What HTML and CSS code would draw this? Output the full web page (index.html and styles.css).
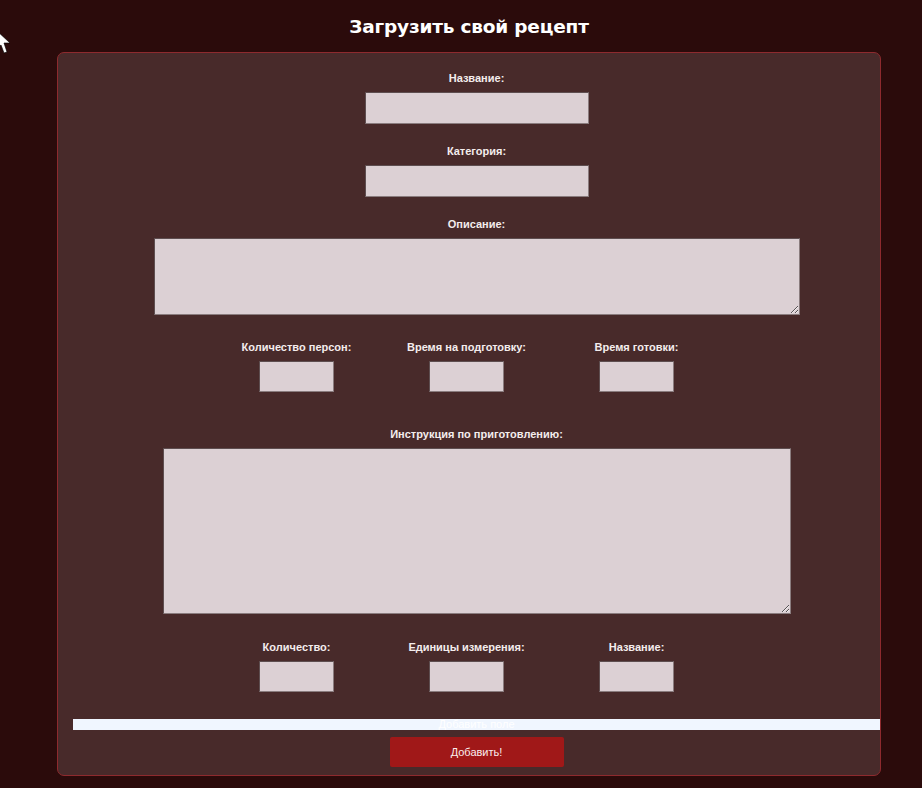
FILE: index.html
```html
<!DOCTYPE html>
<html lang="ru">
<head>
<meta charset="utf-8">
<title>Загрузить свой рецепт</title>
<link rel="stylesheet" href="styles.css">
</head>
<body>
<svg class="cursor" width="12" height="26" viewBox="0 0 12 26"><polygon points="-4,0 10,13 4,13 7,22 4,23 1,15 -4,19" fill="#ffffff" stroke="#000" stroke-width="0.6"/></svg>
<div class="page">
  <h1 class="title">Загрузить свой рецепт</h1>
  <form class="card">
    <div class="field">
      <label class="lbl">Название:</label>
      <input class="inp inp-wide" type="text">
    </div>
    <div class="field gap20">
      <label class="lbl">Категория:</label>
      <input class="inp inp-wide" type="text">
    </div>
    <div class="field gap20">
      <label class="lbl">Описание:</label>
      <textarea class="ta ta-desc"></textarea>
    </div>
    <div class="row gap25">
      <div class="col"><label class="lbl">Количество персон:</label><input class="inp inp-small" type="text"></div>
      <div class="col"><label class="lbl">Время на подготовку:</label><input class="inp inp-small" type="text"></div>
      <div class="col"><label class="lbl">Время готовки:</label><input class="inp inp-small" type="text"></div>
    </div>
    <div class="field gap35">
      <label class="lbl">Инструкция по приготовлению:</label>
      <textarea class="ta ta-instr"></textarea>
    </div>
    <div class="row gap26">
      <div class="col"><label class="lbl">Количество:</label><input class="inp inp-small" type="text"></div>
      <div class="col"><label class="lbl">Единицы измерения:</label><input class="inp inp-small" type="text"></div>
      <div class="col"><label class="lbl">Название:</label><input class="inp inp-small" type="text"></div>
    </div>
    <div class="addbar">Добавить поле</div>
    <div class="btnwrap"><button class="btn" type="button">Добавить!</button></div>
  </form>
</div>
</body>
</html>
```
FILE: styles.css
```css
html, body {
  margin: 0;
  padding: 0;
  background: #2b0b0b;
  height: 100%;
}
body {
  font-family: "Liberation Sans", Arial, sans-serif;
  color: #f2eaea;
  overflow: hidden;
}
.cursor {
  position: absolute;
  left: 0;
  top: 30px;
}
.page {
  width: 824px;
  margin-left: 57px;
}
.title {
  margin: 0;
  padding-top: 15px;
  height: 52px;
  box-sizing: border-box;
  text-align: center;
  font-family: "DejaVu Sans", sans-serif;
  font-weight: bold;
  font-size: 18.5px;
  line-height: 24px;
  color: #ffffff;
  letter-spacing: -0.2px;
}
.card {
  box-sizing: border-box;
  width: 824px;
  height: 724px;
  border: 1px solid #8e2a2e;
  border-radius: 7px;
  background: #482a2a;
  padding: 18px 0 0 15px;
  margin: 0;
}
.field {
  display: flex;
  flex-direction: column;
  align-items: center;
}
.gap20 { margin-top: 20px; }
.gap25 { margin-top: 25px; }
.gap26 { margin-top: 26px; }
.gap35 { margin-top: 35px; }
.lbl {
  display: block;
  font-size: 11px;
  line-height: 14px;
  height: 14px;
  font-weight: bold;
  color: #f4eded;
  white-space: nowrap;
}
.field .lbl { margin-bottom: 7px; }
.col .lbl { margin-bottom: 7px; }
.inp, .ta {
  box-sizing: border-box;
  background: #dcd0d4;
  border: 1px solid #8a7c7e;
  border-top-color: #5e4e50;
  border-left-color: #5e4e50;
  margin: 0;
  padding: 2px;
  font-family: "Liberation Sans", Arial, sans-serif;
  font-size: 12px;
  outline: none;
}
.inp-wide { width: 224px; height: 32px; }
.inp-small { width: 75px; height: 31px; }
.ta-desc { width: 646px; height: 77px; }
.ta-instr { width: 628px; height: 166px; }
.row {
  display: flex;
  justify-content: center;
  padding-right: 20px;
}
.col {
  width: 170px;
  display: flex;
  flex-direction: column;
  align-items: center;
}
.addbar {
  margin-top: 27px;
  height: 11px;
  background: #f0f6ff;
  color: #ffffff;
  font-size: 11px;
  line-height: 11px;
  text-align: center;
  overflow: hidden;
}
.btnwrap {
  display: flex;
  justify-content: center;
  margin-top: 7px;
}
.btn {
  width: 174px;
  height: 30px;
  border: none;
  border-radius: 2px;
  background: #a01818;
  color: #fbeeee;
  font-family: "Liberation Sans", Arial, sans-serif;
  font-size: 11px;
  padding: 0;
}
```
